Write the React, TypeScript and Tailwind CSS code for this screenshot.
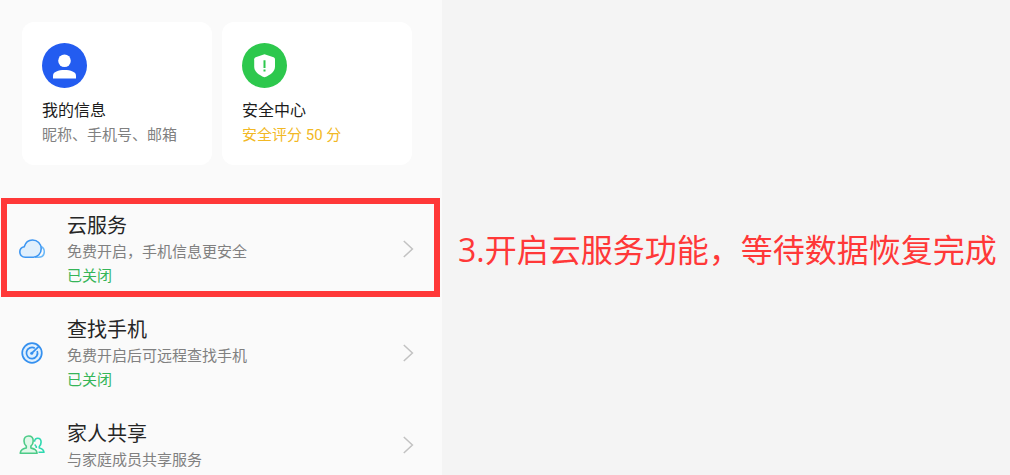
import type { ReactNode } from "react";

type Service = {
  id: string;
  title: string;
  body: string;
  status?: string;
  icon: ReactNode;
  marked?: boolean;
};

const services: Service[] = [
  {
    id: "cloud",
    title: "云服务",
    body: "免费开启，手机信息更安全",
    status: "已关闭",
    icon: <CloudIcon />,
    marked: true,
  },
  {
    id: "find",
    title: "查找手机",
    body: "免费开启后可远程查找手机",
    status: "已关闭",
    icon: <RadarIcon />,
  },
  {
    id: "family",
    title: "家人共享",
    body: "与家庭成员共享服务",
    icon: <FamilyIcon />,
  },
];

export default function App() {
  return (
    <main className="flex min-h-screen bg-[#f4f4f4] font-['Roboto','Noto_Sans_CJK_SC',sans-serif]">
      <section className="w-[442px] shrink-0 bg-[#fafafa] pt-[22px]">
        <div className="grid grid-cols-2 gap-[10px] pl-[22px] pr-[30px]">
          <InfoCard
            href="#profile"
            title="我的信息"
            body="昵称、手机号、邮箱"
            bodyClass="text-[#808080]"
            icon={<ProfileIcon />}
          />
          <InfoCard
            href="#security"
            title="安全中心"
            body="安全评分 50 分"
            bodyClass="text-[#f2b824]"
            icon={<ShieldIcon />}
          />
        </div>

        <ul className="mt-[45px] flex flex-col gap-[26px]">
          {services.map((s) => (
            <ServiceRow key={s.id} service={s} />
          ))}
        </ul>
      </section>

      <section className="flex flex-1 items-center pl-4 pt-6">
        <h1 className="font-['Open_Sans','Noto_Sans_CJK_SC',sans-serif] text-[32px] leading-[48px] text-[#ff3838]">
          3.开启云服务功能，等待数据恢复完成
        </h1>
      </section>
    </main>
  );
}

function InfoCard({
  href,
  title,
  body,
  bodyClass,
  icon,
}: {
  href: string;
  title: string;
  body: string;
  bodyClass: string;
  icon: ReactNode;
}) {
  return (
    <a href={href} className="block rounded-xl bg-white px-5 pb-[18px] pt-[21px]">
      {icon}
      <p className="mt-[11px] text-base leading-6 text-[#1c1c1c]">{title}</p>
      <p className={`text-[15px] leading-6 ${bodyClass}`}>{body}</p>
    </a>
  );
}

function ServiceRow({ service }: { service: Service }) {
  return (
    <li className="relative">
      <a href={`#${service.id}`} className="flex items-center pl-[18px] pr-7">
        <span className="w-[49px] shrink-0">{service.icon}</span>
        <span className="flex-1 pt-[2px]">
          <span className="block text-xl leading-7 text-[#262626]">{service.title}</span>
          <span className="block text-[15px] leading-6 text-[#808080]">{service.body}</span>
          {service.status && (
            <span className="block text-[15px] leading-6 text-[#35b558]">{service.status}</span>
          )}
        </span>
        <Chevron />
      </a>
      {service.marked && (
        <span
          aria-hidden
          className="pointer-events-none absolute -bottom-[9px] -top-3 left-px right-[2px] border-6 border-[#ff3838]"
        />
      )}
    </li>
  );
}

function Chevron() {
  return (
    <svg width="12" height="20" viewBox="0 0 12 20" fill="none" aria-hidden>
      <path d="M1.8 2 10.4 10 1.8 18" stroke="#c2c2c2" strokeWidth="1.5" />
    </svg>
  );
}

function ProfileIcon() {
  return (
    <svg width="45" height="45" viewBox="0 0 45 45" aria-hidden>
      <circle cx="22.5" cy="22.5" r="22.5" fill="#235cf0" />
      <circle cx="22.5" cy="17.8" r="6.3" fill="#fff" />
      <path d="M11 35.5v-3c0-3.6 5.4-5.5 11.5-5.5S34 28.9 34 32.5v3z" fill="#fff" />
    </svg>
  );
}

function ShieldIcon() {
  return (
    <svg width="45" height="45" viewBox="0 0 45 45" aria-hidden>
      <circle cx="22.5" cy="22.5" r="22.5" fill="#2dc84d" />
      <path
        d="M22.5 11.3 31.6 14.3Q33 14.8 33 16.2V23.5C33 28.5 28.5 32 22.5 34.3 16.5 32 12.2 28.5 12.2 23.5V16.2Q12.2 14.8 13.6 14.3Z"
        fill="#fff"
      />
      <path d="M22.5 17.3V25M22.5 26.4V28.6" stroke="#2dc84d" strokeWidth="2" />
    </svg>
  );
}

function CloudIcon() {
  return (
    <svg width="28" height="22" viewBox="0 0 28 22" fill="none" aria-hidden>
      <path
        d="M23 8.5C25.2 9.5 26.3 11.4 26.3 13.7 26.3 17 24 19.2 20.5 19.2H17"
        stroke="#6bb8f8"
        strokeWidth="1.5"
      />
      <path
        d="M7.2 19.2C4 19.2 1.8 17 1.8 14.1 1.8 11.3 3.8 9.3 6.2 8.8 7.5 4.5 10.5 2 14.5 2 19.5 2 23.2 5.8 23.2 10.7 23.2 15.6 19.6 19.2 15.5 19.2Z"
        fill="#e0effc"
        stroke="#3d96f2"
        strokeWidth="1.6"
      />
    </svg>
  );
}

function RadarIcon() {
  return (
    <svg width="28" height="24" viewBox="0 0 28 24" fill="none" aria-hidden>
      <circle cx="14" cy="12" r="9.8" fill="#e0f0fe" stroke="#3590ef" strokeWidth="1.7" />
      <path d="M16.8 7.2A5.6 5.6 0 1 0 19.2 10" stroke="#3590ef" strokeWidth="1.7" />
      <circle cx="13.7" cy="12.3" r="1.5" fill="#3590ef" />
      <path d="M13.8 12.2 20.9 5.3" stroke="#3590ef" strokeWidth="1.7" />
    </svg>
  );
}

function FamilyIcon() {
  return (
    <svg width="28" height="22" viewBox="0 0 28 22" fill="none" strokeLinejoin="round" aria-hidden>
      <path
        d="M16.5 7.8C16.7 5.5 17.9 4.2 19.7 4.2 21.8 4.2 23.1 5.8 23.1 8.1 23.1 10 22.4 11.5 21.3 12.5V14C23.8 14.6 25.6 15.4 26 18.3H20.5M18.3 14V12.5C17.7 12 17.2 11.3 16.9 10.5"
        stroke="#2ed9b0"
        strokeWidth="1.6"
      />
      <path
        d="M10.6 2C13.4 2 15.2 4 15.2 7 15.2 9.2 14.2 11 12.9 12.2V14C16 14.8 18.7 15.3 19.1 19.3H2.2C2.6 15.3 5.2 14.8 8.3 14V12.2C7 11 6 9.2 6 7 6 4 7.8 2 10.6 2Z"
        fill="#e1f8e9"
        stroke="#4ccb88"
        strokeWidth="1.6"
      />
    </svg>
  );
}
